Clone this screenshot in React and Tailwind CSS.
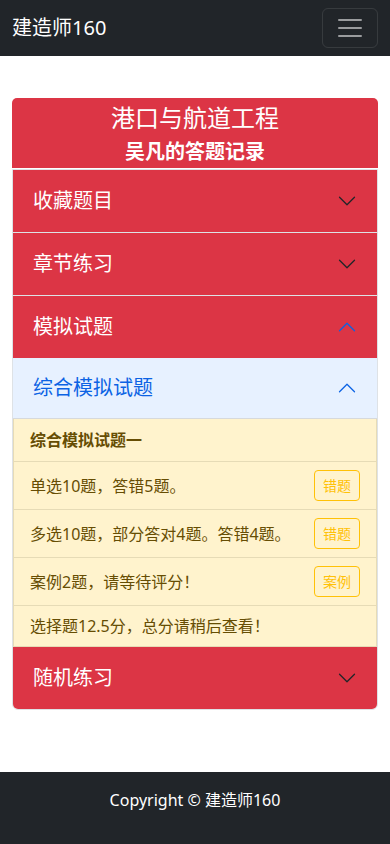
import React from "react";

const font = { fontFamily: '"Noto Sans", "Noto Sans CJK SC", sans-serif' };

function Chevron({ up, color }) {
  return (
    <svg width="20" height="20" viewBox="0 0 16 16" className={up ? "rotate-180" : ""}>
      <path d="M2 5L8 11L14 5" fill="none" stroke={color} strokeWidth="1" strokeLinecap="round" strokeLinejoin="round" />
    </svg>
  );
}

function RedItem({ label, up, last }) {
  return (
    <div className={"flex items-center justify-between bg-[#dc3545] px-5 py-4 " + (last ? "rounded-b-[5px]" : "")}>
      <span className="text-[20px] leading-[30px] text-white">{label}</span>
      <Chevron up={up} color={up ? "#0c63e4" : "#212529"} />
    </div>
  );
}

function Row({ text, btn, bold }) {
  return (
    <div className={"flex items-center justify-between border-b border-[#e6dbb6] px-4 " + (bold ? "py-[9px]" : "py-2")}>
      <span className={"text-[16px] leading-6 text-[#664d03] " + (bold ? "font-bold" : "")}>{text}</span>
      {btn && (
        <span className="rounded-[4px] border border-[#ffc107] px-2 py-1 text-[14px] leading-[21px] text-[#ffc107]">{btn}</span>
      )}
    </div>
  );
}

export default function App() {
  return (
    <div style={font} className="min-h-[844px] bg-white flex flex-col">
      <nav className="flex h-14 items-center justify-between bg-[#212529] px-3">
        <span className="text-[20px] leading-[30px] text-white">建造师160</span>
        <div className="flex h-[40px] w-[56px] items-center justify-center rounded-[6px] border border-white/10">
          <svg width="30" height="30" viewBox="0 0 30 30">
            <path d="M4 7h22M4 15h22M4 23h22" stroke="rgba(255,255,255,0.55)" strokeWidth="2" strokeLinecap="round" />
          </svg>
        </div>
      </nav>

      <main className="px-3 pt-[42px]">
        <div className="rounded-t-[5px] bg-[#dc3545] pt-[2px] text-center text-white">
          <div className="text-[24px] leading-[36px]">港口与航道工程</div>
          <div className="text-[20px] font-bold leading-[32px]">吴凡的答题记录</div>
        </div>
        <div className="h-px" />
        <div className="rounded-b-[6px] border border-[#dee2e6]">
          <RedItem label="收藏题目" />
          <div className="h-px bg-[#dee2e6]" />
          <RedItem label="章节练习" />
          <div className="h-px bg-[#dee2e6]" />
          <RedItem label="模拟试题" up />
          <div className="flex items-center justify-between border-b border-[#d6d9dc] bg-[#e7f1ff] px-5 py-[15px]">
            <span className="text-[20px] leading-[30px] text-[#0c63e4]">综合模拟试题</span>
            <Chevron up color="#0c63e4" />
          </div>
          <div className="border-x border-[#e6dbb6] bg-[#fff3cd]">
            <Row text="综合模拟试题一" bold />
            <Row text="单选10题，答错5题。" btn="错题" />
            <Row text="多选10题，部分答对4题。答错4题。" btn="错题" />
            <Row text="案例2题，请等待评分！" btn="案例" />
            <Row text="选择题12.5分，总分请稍后查看！" />
          </div>
          <RedItem label="随机练习" last />
        </div>
      </main>

      <footer className="mt-auto h-[72px] bg-[#212529] pt-4 text-center">
        <span className="text-[16px] leading-6 text-white">Copyright © 建造师160</span>
      </footer>
    </div>
  );
}
